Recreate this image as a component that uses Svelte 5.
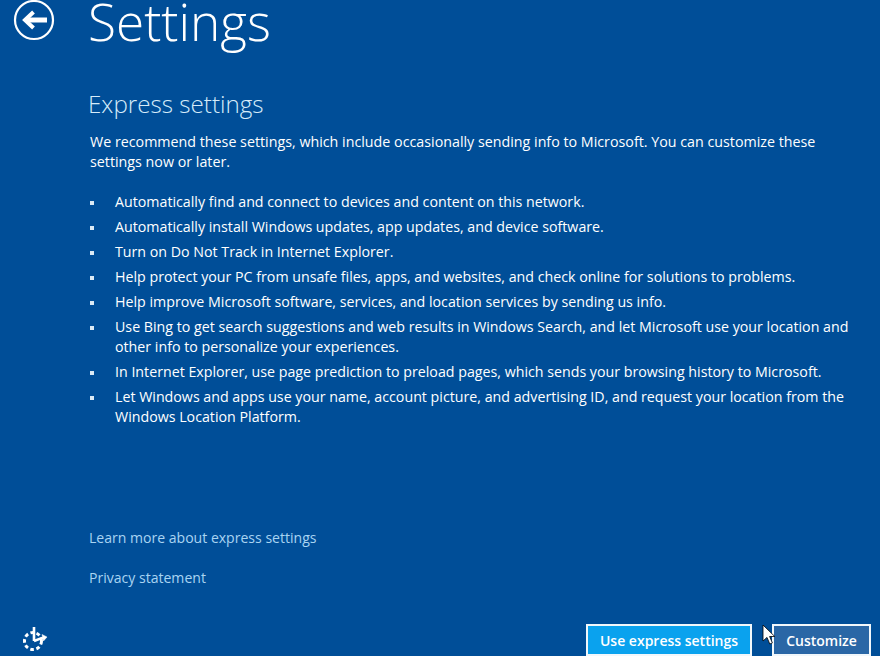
<script lang="ts">
  const items = [
    "Automatically find and connect to devices and content on this network.",
    "Automatically install Windows updates, app updates, and device software.",
    "Turn on Do Not Track in Internet Explorer.",
    "Help protect your PC from unsafe files, apps, and websites, and check online for solutions to problems.",
    "Help improve Microsoft software, services, and location services by sending us info.",
    "Use Bing to get search suggestions and web results in Windows Search, and let Microsoft use your location and other info to personalize your experiences.",
    "In Internet Explorer, use page prediction to preload pages, which sends your browsing history to Microsoft.",
    "Let Windows and apps use your name, account picture, and advertising ID, and request your location from the Windows Location Platform."
  ];
</script>

<div class="page">
  <header class="head">
    <svg class="back" width="42" height="42" viewBox="0 0 42 42" fill="none" stroke="#fff">
      <circle cx="21" cy="21" r="19" stroke-width="2.2" />
      <path d="M13 21h21" stroke-width="5" />
      <path d="M20.5 13l-8.5 8 8.500 8" stroke-width="4" />
    </svg>
    <h1>Settings</h1>
  </header>

  <main class="content">
    <h2>Express settings</h2>
    <p class="intro">
      We recommend these settings, which include occasionally sending info to Microsoft. You can customize these settings now or later.
    </p>
    <ul>
      {#each items as item}
        <li><span class="dot"></span><span>{item}</span></li>
      {/each}
    </ul>
  </main>

  <nav class="links">
    <span>Learn more about express settings</span>
    <span>Privacy statement</span>
  </nav>

  <footer class="foot">
    <svg class="access" width="28" height="28" viewBox="0 0 28 28" fill="none" stroke="#fff" stroke-width="3">
      <path d="M14 1v14" stroke-width="2.6" />
      <path d="M14 15l9-3.400" stroke-width="2.6" />
      <path d="M22 8.500l5 2.500-3.500 4z" fill="#fff" stroke-width="0.5" />
      <circle cx="13" cy="15" r="8.500" stroke-dasharray="3.600 2.600" />
    </svg>
    <div class="buttons">
      <button class="primary">Use express settings</button>
      <button class="secondary">Customize</button>
    </div>
  </footer>

  <svg class="cursor" width="14" height="22" viewBox="0 0 14 22">
    <path d="M1 1v16l4-3.600 2.800 6.600 2.600-1.100-2.800-6.400h5.200z" fill="#fff" stroke="#000" stroke-width="0.8" />
  </svg>
</div>

<style>
  :global(body) {
    margin: 0;
  }
  .page {
    position: relative;
    width: 880px;
    height: 656px;
    overflow: hidden;
    display: flex;
    flex-direction: column;
    background: #004e98;
    color: #fff;
    font-family: "Open Sans", "Noto Sans", sans-serif;
  }
  .head {
    display: flex;
    align-items: flex-start;
    height: 85px;
    padding-left: 13px;
  }
  .back {
    margin-top: -1px;
  }
  h1 {
    margin: -13px 0 0 33px;
    font-size: 51.300px;
    line-height: 68px;
    font-weight: 300;
  }
  .content {
    padding-left: 89px;
    padding-right: 24px;
    height: 443px;
  }
  h2 {
    margin: 0 0 9px -1px;
    font-size: 24.200px;
    line-height: 38px;
    font-weight: 300;
    color: #d6ecfa;
  }
  .intro {
    margin: 0 0 20px 1px;
    font-size: 14.280px;
    line-height: 20px;
  }
  ul {
    margin: 0;
    padding: 0 0 0 1px;
    list-style: none;
    font-size: 14.220px;
    line-height: 20px;
  }
  li {
    display: flex;
    margin-bottom: 5px;
  }
  .dot {
    flex: none;
    width: 4px;
    height: 4px;
    margin: 9px 21px 0 0;
    background: #dbeaf6;
  }
  .links {
    display: flex;
    flex-direction: column;
    gap: 20px;
    padding-left: 89px;
    font-size: 14.050px;
    line-height: 20px;
    color: #a9d4f2;
  }
  .foot {
    display: flex;
    justify-content: space-between;
    align-items: flex-start;
    margin-top: 36px;
    padding: 0 9px 0 20px;
  }
  .access {
    margin-top: 2px;
  }
  .buttons {
    display: flex;
    gap: 20px;
  }
  button {
    height: 32px;
    padding: 0;
    font: 600 14px "Open Sans", sans-serif;
    color: #fff;
    border: 2px solid #f1f7fb;
  }
  .primary {
    width: 166px;
    background: #0aa2ee;
  }
  .secondary {
    width: 99px;
    background: #2a67a6;
  }
  .cursor {
    position: absolute;
    left: 762px;
    top: 624px;
  }
</style>
